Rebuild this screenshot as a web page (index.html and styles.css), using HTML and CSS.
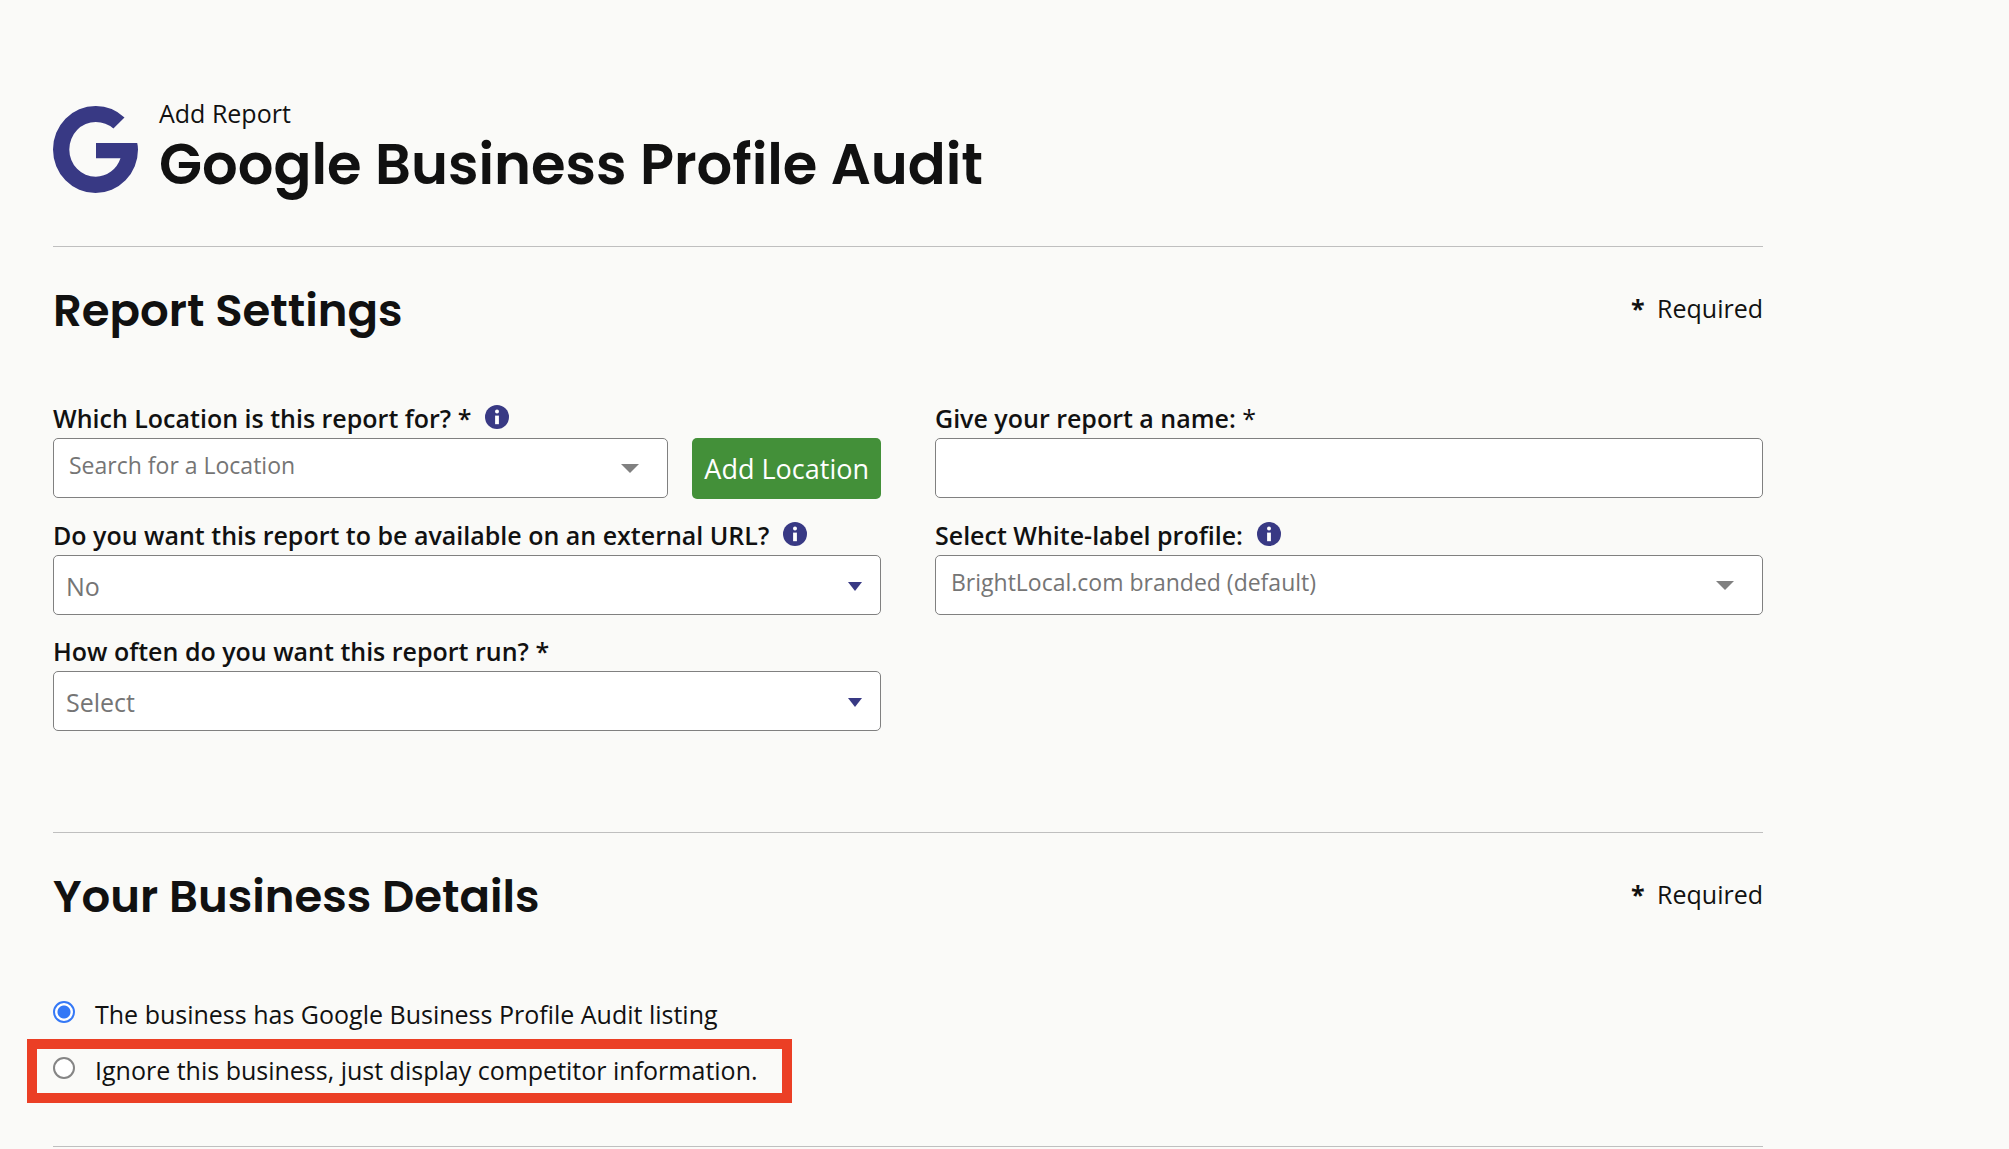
FILE: index.html
```html
<!DOCTYPE html>
<html lang="en">
<head>
<meta charset="utf-8">
<meta name="viewport" content="width=device-width, initial-scale=1">
<title>Google Business Profile Audit</title>
<link rel="stylesheet" href="styles.css">
</head>
<body>
<svg class="sprite" aria-hidden="true">
  <symbol id="info" viewBox="0 0 24 24">
    <circle cx="12" cy="12" r="12" fill="#383984"/>
    <circle cx="12" cy="6.6" r="2" fill="#fff"/>
    <path d="M10.1 10.6h3.8v8.6h-3.8z" fill="#fff"/>
  </symbol>
</svg>
<main class="page">
  <header class="page-header">
    <svg class="logo" viewBox="0 0 85 87" aria-hidden="true">
      <path fill="#383984" d="M71.5 11.5A42.5 43.5 0 0 0 42.5 0A42.5 43.5 0 0 0 0 43.5A42.5 43.5 0 0 0 42.5 87A42.5 43.5 0 0 0 85 43.5Q85 40 84.2 37H43V52.3H67.5A26.5 27.4 0 0 1 42.8 70.8A26.5 27.4 0 0 1 16.3 43.4A26.5 27.4 0 0 1 42.8 16Q53 16 60.4 22.6Z"/>
    </svg>
    <div class="titles">
      <p class="kicker">Add Report</p>
      <h1>Google Business Profile Audit</h1>
    </div>
  </header>

  <form>
    <section class="section settings">
      <div class="section-head">
        <h2>Report Settings</h2>
        <p class="required"><b>*</b> Required</p>
      </div>
      <div class="fields">
        <div class="field">
          <div class="label-row">
            <label for="location">Which Location is this report for? *</label>
            <button type="button" class="info" aria-label="About locations"><svg><use href="#info"/></svg></button>
          </div>
          <div class="with-button">
            <select id="location" class="control picker"><option>Search for a Location</option></select>
            <button type="button" class="add">Add Location</button>
          </div>
        </div>
        <div class="field">
          <div class="label-row">
            <label for="name">Give your report a name: <span class="star">*</span></label>
          </div>
          <input id="name" type="text" class="control">
        </div>
        <div class="field">
          <div class="label-row">
            <label for="external">Do you want this report to be available on an external URL?</label>
            <button type="button" class="info" aria-label="About external URLs"><svg><use href="#info"/></svg></button>
          </div>
          <select id="external" class="control choice"><option>No</option><option>Yes</option></select>
        </div>
        <div class="field">
          <div class="label-row">
            <label for="profile">Select White-label profile:</label>
            <button type="button" class="info" aria-label="About white-label profiles"><svg><use href="#info"/></svg></button>
          </div>
          <select id="profile" class="control picker"><option>BrightLocal.com branded (default)</option></select>
        </div>
        <div class="field">
          <div class="label-row">
            <label for="frequency">How often do you want this report run? *</label>
          </div>
          <select id="frequency" class="control choice"><option>Select</option></select>
        </div>
      </div>
    </section>

    <section class="section details">
      <div class="section-head">
        <h2>Your Business Details</h2>
        <p class="required"><b>*</b> Required</p>
      </div>
      <div class="options">
        <label class="option"><input type="radio" name="listing" checked><span>The business has Google Business Profile Audit listing</span></label>
        <label class="option highlighted"><input type="radio" name="listing"><span>Ignore this business, just display competitor information.</span></label>
      </div>
    </section>
  </form>
</main>
</body>
</html>
```
FILE: styles.css
```css
* {
  box-sizing: border-box;
}

body {
  margin: 0;
  background: #fafaf8;
  color: #111;
  font: 25px/36px "Open Sans", "Noto Sans", sans-serif;
}

h1,
h2,
p {
  margin: 0;
}

.sprite {
  display: none;
}

.page {
  padding: 95px 246px 0 53px;
}

.page-header {
  display: flex;
  gap: 21px;
  padding-bottom: 47px;
}

.logo {
  flex: none;
  width: 85px;
  height: 87px;
  margin-top: 11px;
}

h1,
h2 {
  font-family: Poppins, Inter, sans-serif;
  font-weight: 600;
}

h1 {
  font-size: 56px;
  line-height: 68px;
}

h2 {
  font-size: 45px;
  line-height: 56px;
}

.section {
  border-top: 1px solid #bfbfbf;
}

.settings {
  padding: 36px 0 101px;
}

.details {
  padding: 36px 0 43px;
  border-bottom: 1px solid #bfbfbf;
}

.section-head {
  display: flex;
  justify-content: space-between;
  align-items: center;
}

.required {
  padding-bottom: 6px;
}

.required b {
  margin-right: 6px;
}

.fields {
  display: grid;
  grid-template-columns: 1fr 1fr;
  gap: 18px 54px;
  margin-top: 61px;
}

.label-row {
  display: flex;
  align-items: center;
  gap: 14px;
  margin-bottom: 2px;
  font-weight: 600;
}

.star {
  font-weight: 400;
}

.info {
  width: 24px;
  height: 24px;
  margin-bottom: 3px;
  padding: 0;
  border: 0;
  background: none;
}

.info svg {
  display: block;
  width: 24px;
  height: 24px;
}

.control {
  display: block;
  width: 100%;
  height: 60px;
  padding: 0 12px;
  border: 1px solid #808080;
  border-radius: 5px;
  background-color: #fff;
  background-repeat: no-repeat;
  color: #757575;
  font: inherit;
  appearance: none;
}

.choice {
  padding-top: 2px;
  background-image: url("data:image/svg+xml,%3Csvg xmlns='http://www.w3.org/2000/svg' width='14' height='9'%3E%3Cpath d='M0 0h14L7 9z' fill='%23383984'/%3E%3C/svg%3E");
  background-position: right 18px top 26px;
}

.picker {
  padding: 0 15px 6px;
  background-image: url("data:image/svg+xml,%3Csvg xmlns='http://www.w3.org/2000/svg' width='18' height='9'%3E%3Cpath d='M0 0h18L9 9z' fill='%23808080'/%3E%3C/svg%3E");
  background-position: right 28px top 25px;
  font-size: 23px;
}

.with-button {
  display: flex;
  gap: 24px;
}

.with-button .control {
  flex: 1;
  min-width: 0;
}

.add {
  flex: none;
  height: 61px;
  padding: 0 12px;
  border: 0;
  border-radius: 5px;
  background: #439039;
  color: #fff;
  font: 27px/36px "Open Sans", "Noto Sans", sans-serif;
}

.options {
  display: flex;
  flex-direction: column;
  align-items: flex-start;
  margin-top: 71px;
}

.option {
  display: flex;
  gap: 20px;
}

.option input {
  appearance: none;
  flex: none;
  width: 22px;
  height: 22px;
  margin: 5px 0 0;
  border: 2px solid #858585;
  border-radius: 50%;
  background: #fff;
}

.option input:checked {
  border-color: #3478f6;
  background: radial-gradient(circle, #3478f6 6px, #fff 7px);
}

/* The frame reaches past the content edge so the radios stay aligned. */
.highlighted {
  margin: 7px 0 0 -26px;
  padding: 3px 24px 5px 16px;
  border: 10px solid #eb3f25;
}
```
